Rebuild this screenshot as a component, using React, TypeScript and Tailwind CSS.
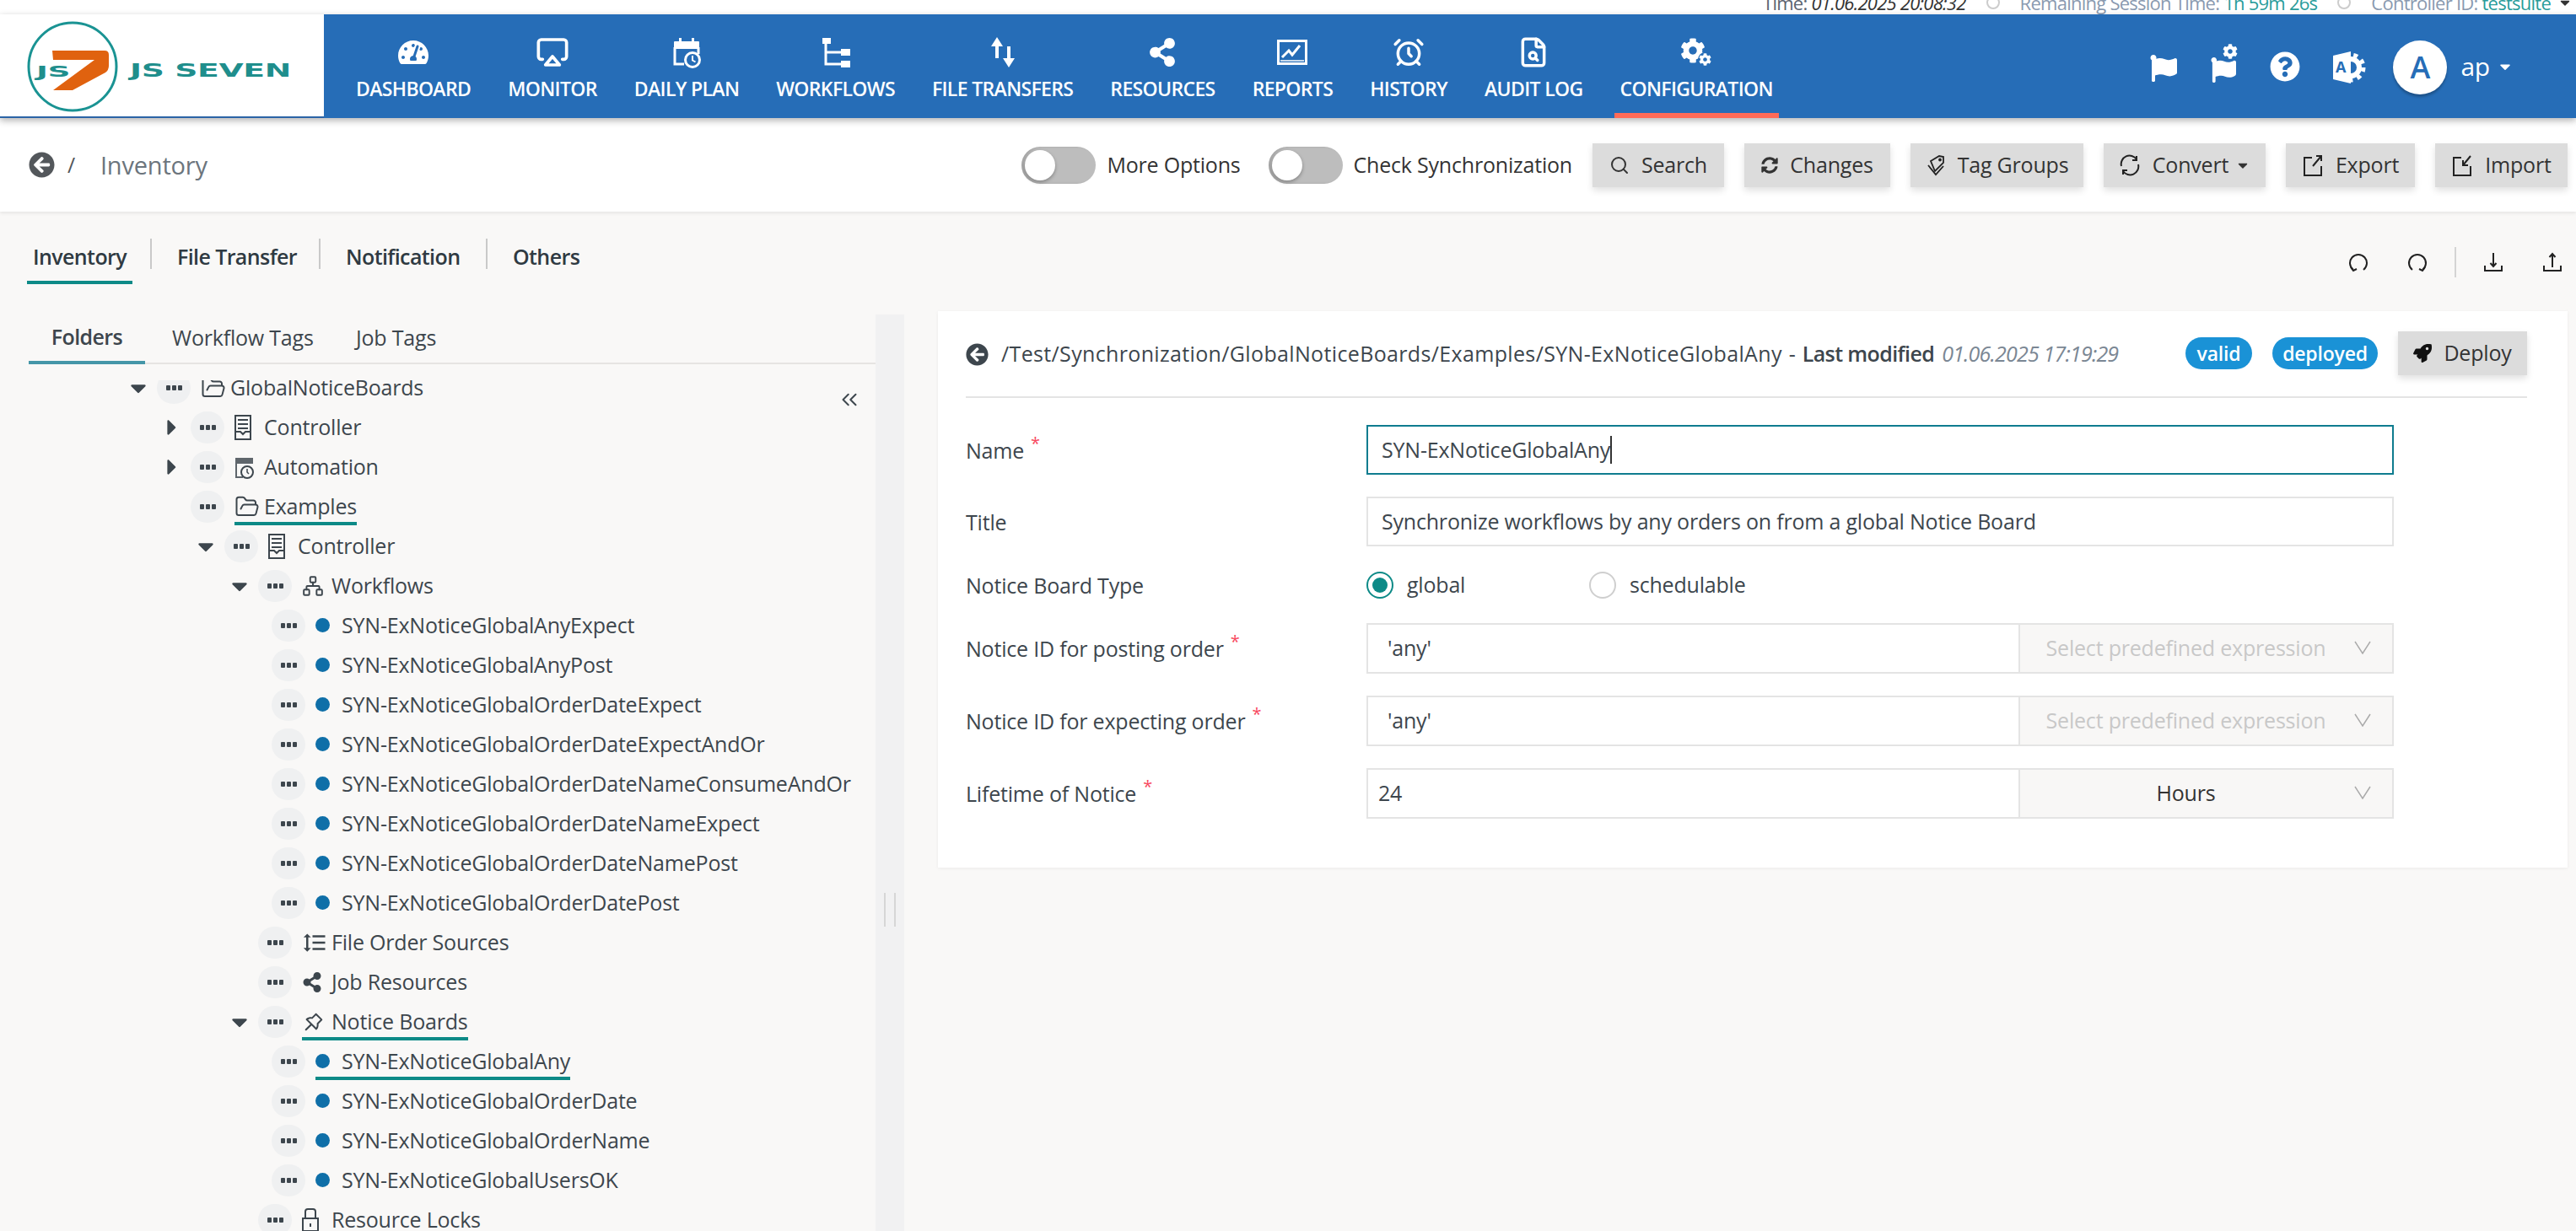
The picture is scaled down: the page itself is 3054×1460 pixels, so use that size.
import React from 'react';
import { AlarmClock, Airplay, ChevronsLeft, FileSearch, FolderOpen, Network, Search } from 'lucide-react';
import {
    FaTachometerAlt, FaShareAlt, FaCog, FaFlag, FaQuestionCircle, FaCaretDown, FaCaretRight,
    FaArrowCircleLeft, FaRocket, FaSyncAlt,
} from 'react-icons/fa';
import { AiOutlinePushpin } from 'react-icons/ai';
import { MdFormatLineSpacing } from 'react-icons/md';

const DailyPlanIcon = ({ className = '' }: { className?: string }) => (
    <svg viewBox="0 0 33 37" className={className} fill="none">
        <path d="M2 5h5V1h3v4h12V1h3v4h5a1 1 0 0 1 1 1v8H1V6a1 1 0 0 1 1-1z" fill="currentColor" />
        <path d="M2 12v20h11M30 12v8" stroke="currentColor" strokeWidth="3" />
        <circle cx="23" cy="27" r="8.5" stroke="currentColor" strokeWidth="3" />
        <path d="M23 22v5.5l3.5 2" stroke="currentColor" strokeWidth="2" />
    </svg>
);

const WorkflowIcon = () => (
    <svg viewBox="0 0 34 36" className="w-[34px] h-[36px]" fill="none">
        <rect x="1" y="1" width="10" height="7" fill="currentColor" />
        <rect x="23" y="14" width="11" height="8" fill="currentColor" />
        <rect x="23" y="28" width="11" height="8" fill="currentColor" />
        <path d="M5 8v24h18M5 18h18" stroke="currentColor" strokeWidth="3" />
    </svg>
);

const TransferIcon = () => (
    <svg viewBox="0 0 30 36" className="w-[30px] h-[36px]" fill="currentColor">
        <path d="M8 0l7 11h-5v14H6V11H1z" />
        <path d="M22 36l-7-11h5V11h4v14h5z" />
    </svg>
);

const ReportsIcon = () => (
    <svg viewBox="0 0 36 30" className="w-[36px] h-[30px]" fill="none" stroke="currentColor">
        <rect x="1.5" y="1.5" width="33" height="27" strokeWidth="3" />
        <path d="M6 21l8-8 4 5 9-11" strokeWidth="3" />
        <path d="M4 25h28" strokeWidth="1.5" />
    </svg>
);

const ConfigIcon = () => (
    <span className="relative block w-[38px] h-[34px]">
        <FaCog size={30} />
        <span className="absolute right-0 bottom-0 rounded-full bg-[#266db7] p-[1px]">
            <FaCog size={15} />
        </span>
    </span>
);

const FlagGearIcon = () => (
    <span className="relative block w-[32px] h-[46px]">
        <span className="absolute left-[14px] top-0"><FaCog size={18} /></span>
        <span className="absolute left-0 bottom-0"><FaFlag size={30} /></span>
    </span>
);

const AccessIcon = () => (
    <svg viewBox="0 0 40 38" className="w-[40px] h-[38px]">
        <g transform="translate(21 19)">
            <circle r="10" fill="none" stroke="#fff" strokeWidth="6" />
            <circle r="15" fill="none" stroke="#fff" strokeWidth="5" strokeDasharray="5 5.5" />
        </g>
        <path d="M0 5L21 0v38L0 33z" fill="#fff" />
        <text x="3" y="25" fontSize="18" fontWeight="700" fill="#266db7" fontFamily="Open Sans, sans-serif">A</text>
    </svg>
);

const Undo = ({ flip = false }: { flip?: boolean }) => (
    <svg viewBox="0 0 24 24" className={`w-[24px] h-[24px] ${flip ? '-scale-x-100' : ''}`} fill="none" stroke="#222" strokeWidth="2">
        <path d="M6 21A10 10 0 1 1 18 21" />
        <path d="M3 18l3 4 4-2" />
    </svg>
);

const TrayArrow = ({ up = false }: { up?: boolean }) => (
    <svg viewBox="0 0 24 24" className="w-[24px] h-[24px]" fill="none" stroke="#222" strokeWidth="2">
        <path d="M2 16v6h20v-6" />
        {up ? <path d="M12 18V2M8.5 6L12 2l3.5 4" /> : <path d="M12 1v16M8.5 13l3.5 4 3.5-4" />}
    </svg>
);

const ChangesIcon = () => <FaSyncAlt size={20} />;

const TagIcon = () => (
    <svg viewBox="0 0 24 26" className="w-[24px] h-[26px]" fill="none" stroke="#222" strokeWidth="1.8">
        <path d="M6 8l10-6 5 1v7L11 20z" />
        <circle cx="17" cy="6.5" r="1" />
        <path d="M3 13l9 11 9-10" />
    </svg>
);

const ConvertIcon = () => (
    <svg viewBox="0 0 26 26" className="w-[26px] h-[26px]" fill="none" stroke="#222" strokeWidth="2">
        <path d="M3 14A10 10 0 0 1 21 6" />
        <path d="M23 12A10 10 0 0 1 5 20" />
        <path d="M21 2v5h-5M5 24v-5h5" />
    </svg>
);

const ExportIcon = ({ down = false }: { down?: boolean }) => (
    <svg viewBox="0 0 26 26" className="w-[26px] h-[26px]" fill="none" stroke="#222" strokeWidth="2">
        <path d="M12 4H3v21h20v-11" />
        {down ? <path d="M23 2L14 13M14 7v6h6" /> : <path d="M13 14L23 2M17 2h6v6" />}
    </svg>
);

const ControllerIcon = () => (
    <svg viewBox="0 0 20 30" className="w-[20px] h-[30px]" fill="none" stroke="#3d464d" strokeWidth="2">
        <path d="M1 1h18v28H1z" />
        <path d="M4 6h12M4 11h12M4 16h12" />
        <path d="M1 20h6l3 3 3-3h6" />
    </svg>
);

const AutomationIcon = () => (
    <svg viewBox="0 0 23 30" className="w-[23px] h-[30px]" fill="none">
        <path d="M1 4h21v7H1z" fill="#5f666c" />
        <path d="M2 10v17h8" stroke="#5f666c" strokeWidth="2" />
        <circle cx="15" cy="21" r="7" fill="#f9f8f7" stroke="#3d464d" strokeWidth="2" />
        <path d="M15 17v4l2 2" stroke="#3d464d" strokeWidth="1.5" />
    </svg>
);

const LockIcon = () => (
    <svg viewBox="0 0 20 30" className="w-[20px] h-[30px]" fill="none" stroke="#3d464d" strokeWidth="2">
        <path d="M4 14V5a3 3 0 0 1 3-3h6a3 3 0 0 1 3 3v9" />
        <rect x="1" y="13" width="18" height="15" />
        <path d="M10 19v4" />
    </svg>
);

const navItems = [
    { label: 'DASHBOARD', icon: <FaTachometerAlt size={36} /> },
    { label: 'MONITOR', icon: <Airplay size={40} strokeWidth={2.2} /> },
    { label: 'DAILY PLAN', icon: <DailyPlanIcon className="w-[33px] h-[37px]" /> },
    { label: 'WORKFLOWS', icon: <WorkflowIcon /> },
    { label: 'FILE TRANSFERS', icon: <TransferIcon /> },
    { label: 'RESOURCES', icon: <FaShareAlt size={34} /> },
    { label: 'REPORTS', icon: <ReportsIcon /> },
    { label: 'HISTORY', icon: <AlarmClock size={38} strokeWidth={2.2} /> },
    { label: 'AUDIT LOG', icon: <FileSearch size={38} strokeWidth={2.2} /> },
    { label: 'CONFIGURATION', icon: <ConfigIcon />, active: true },
];

const Logo = () => (
    <svg viewBox="0 0 384 122" className="w-[384px] h-[122px]">
        <circle cx="86" cy="62" r="52" fill="none" stroke="#1a9393" strokeWidth="3" />
        <path d="M62 43h62q5 0 5 5v13q0 5-4 8L86 90H63l49-36H63z" fill="#e0620f" />
        <text x="43" y="74" fontSize="17" fontWeight="700" fill="#1f8e8c" textLength="40" lengthAdjust="spacingAndGlyphs" fontFamily="DejaVu Sans, sans-serif">JS</text>
        <text x="154" y="74" fontSize="22" fontWeight="700" fill="#1f8e8c" textLength="191" lengthAdjust="spacingAndGlyphs" fontFamily="DejaVu Sans, sans-serif">JS SEVEN</text>
    </svg>
);

const ToolbarButton = ({ icon, label, w, caret }: { icon: React.ReactNode; label: string; w: string; caret?: boolean }) => (
    <div className={`${w} h-[52px] bg-[#dcdcdc] shadow-[0_4px_8px_rgba(0,0,0,0.12)] flex items-center justify-center gap-[14px] text-[#333]`}>
        {icon}
        <span>{label}</span>
        {caret && <FaCaretDown size={18} className="-ml-[6px]" />}
    </div>
);

const Toggle = ({ label }: { label: string }) => (
    <div className="flex items-center gap-[13px]">
        <div className="w-[88px] h-[44px] rounded-full bg-[#bdbdbd] flex items-center pl-[4px] shadow-[inset_3px_0_3px_rgba(0,0,0,0.12)]">
            <div className="w-[36px] h-[36px] rounded-full bg-white shadow-[0_2px_4px_rgba(0,0,0,0.3)]" />
        </div>
        <span className="text-[#333]">{label}</span>
    </div>
);

type Row = {
    pad: string;
    arrow?: 'down' | 'right';
    icon?: React.ReactNode;
    label: string;
    selected?: boolean;
};

const dot = <span className="block w-[17px] h-[17px] rounded-full bg-[#0f6fa8]" />;

const treeRows: Row[] = [
    { pad: 'pl-[154px]', arrow: 'down', icon: <FolderOpen size={30} strokeWidth={1.6} />, label: 'GlobalNoticeBoards' },
    { pad: 'pl-[194px]', arrow: 'right', icon: <ControllerIcon />, label: 'Controller' },
    { pad: 'pl-[194px]', arrow: 'right', icon: <AutomationIcon />, label: 'Automation' },
    { pad: 'pl-[194px]', icon: <FolderOpen size={30} strokeWidth={1.6} />, label: 'Examples', selected: true },
    { pad: 'pl-[234px]', arrow: 'down', icon: <ControllerIcon />, label: 'Controller' },
    { pad: 'pl-[274px]', arrow: 'down', icon: <Network size={26} strokeWidth={1.8} />, label: 'Workflows' },
    { pad: 'pl-[290px]', label: 'SYN-ExNoticeGlobalAnyExpect' },
    { pad: 'pl-[290px]', label: 'SYN-ExNoticeGlobalAnyPost' },
    { pad: 'pl-[290px]', label: 'SYN-ExNoticeGlobalOrderDateExpect' },
    { pad: 'pl-[290px]', label: 'SYN-ExNoticeGlobalOrderDateExpectAndOr' },
    { pad: 'pl-[290px]', label: 'SYN-ExNoticeGlobalOrderDateNameConsumeAndOr' },
    { pad: 'pl-[290px]', label: 'SYN-ExNoticeGlobalOrderDateNameExpect' },
    { pad: 'pl-[290px]', label: 'SYN-ExNoticeGlobalOrderDateNamePost' },
    { pad: 'pl-[290px]', label: 'SYN-ExNoticeGlobalOrderDatePost' },
    { pad: 'pl-[274px]', icon: <MdFormatLineSpacing size={30} />, label: 'File Order Sources' },
    { pad: 'pl-[274px]', icon: <FaShareAlt size={24} />, label: 'Job Resources' },
    { pad: 'pl-[274px]', arrow: 'down', icon: <AiOutlinePushpin size={28} />, label: 'Notice Boards', selected: true },
    { pad: 'pl-[290px]', label: 'SYN-ExNoticeGlobalAny', selected: true },
    { pad: 'pl-[290px]', label: 'SYN-ExNoticeGlobalOrderDate' },
    { pad: 'pl-[290px]', label: 'SYN-ExNoticeGlobalOrderName' },
    { pad: 'pl-[290px]', label: 'SYN-ExNoticeGlobalUsersOK' },
    { pad: 'pl-[274px]', icon: <LockIcon />, label: 'Resource Locks' },
];

const TreeRow = ({ row }: { row: Row }) => (
    <div className={`${row.pad} h-[47px] flex items-center`}>
        <span className="w-[20px] mr-[12px] flex justify-center text-[#3d464d]">
            {row.arrow === 'down' && <FaCaretDown size={30} />}
            {row.arrow === 'right' && <FaCaretRight size={30} />}
        </span>
        <span className="w-[40px] h-[38px] rounded-full bg-[#eff0f1] flex items-center justify-center gap-[2px] shrink-0">
            <i className="block w-[5px] h-[6px] rounded-[1px] bg-[#3d464d]" />
            <i className="block w-[5px] h-[6px] rounded-[1px] bg-[#3d464d]" />
            <i className="block w-[5px] h-[6px] rounded-[1px] bg-[#3d464d]" />
        </span>
        <span className={`ml-[12px] h-[36px] flex items-center whitespace-nowrap ${row.selected ? 'shadow-[0_4px_0_0_#0d8a87]' : ''}`}>
            <span className={`flex items-center ${row.icon ? 'w-[35px]' : 'w-[31px]'}`}>{row.icon ?? dot}</span>
            {row.label}
        </span>
    </div>
);

const Chevron = () => (
    <svg viewBox="0 0 20 16" className="w-[20px] h-[16px] absolute right-[25px] top-[19px]" fill="none" stroke="#aaa" strokeWidth="1.5">
        <path d="M1 1l9 14 9-14" />
    </svg>
);

const FormLabel = ({ text, required }: { text: string; required?: boolean }) => (
    <div className="w-[475px] h-[36px] flex shrink-0">
        <span className="leading-[36px]">{text}</span>
        {required && <span className="ml-[8px] text-[#f8485e] text-[20px] leading-[20px]">*</span>}
    </div>
);

const Combo = ({ value, option, placeholder, pad }: { value: string; option: string; placeholder?: boolean; pad: string }) => (
    <div className="flex h-[60px] w-[1218px] border-2 border-[#e4e4e4]">
        <div className={`w-[773px] flex items-center ${pad} border-r-2 border-[#e4e4e4]`}>{value}</div>
        <div className={`relative flex-1 bg-[#f8f7f6] flex items-center justify-center pr-[48px] ${placeholder ? 'text-[#c8c8c8]' : 'text-[#333]'}`}>
            {option}
            <Chevron />
        </div>
    </div>
);

export default function App() {
    return (
        <div className="w-screen h-screen overflow-hidden flex flex-col bg-[#f9f8f7] font-['Open_Sans',sans-serif] text-[25px] tracking-[-0.2px] text-[#3d464d]">
            <div className="h-[17px] shrink-0 bg-white overflow-hidden flex justify-end items-end pr-[4px] text-[22px] leading-[30px] tracking-[-0.75px]">
                <div className="flex items-center h-[30px] mb-[-1px] whitespace-nowrap text-[#8a9ab0]">
                    <span className="text-[#5a6470]">Time:&nbsp;</span>
                    <span className="italic text-[#333]">01.06.2025 20:08:32</span>
                    <span className="mx-[24px] w-[16px] h-[16px] rounded-full border-2 border-[#ccc]" />
                    <span>Remaining Session Time:&nbsp;</span>
                    <span className="text-[#2a9d9b]">1h 59m 26s</span>
                    <span className="mx-[24px] w-[16px] h-[16px] rounded-full border-2 border-[#ccc]" />
                    <span>Controller ID:&nbsp;</span>
                    <span className="text-[#2a9d9b]">testsuite</span>
                    <FaCaretDown size={18} className="ml-[8px] text-[#333]" />
                </div>
            </div>

            <header className="h-[123px] shrink-0 bg-[#266db7] flex text-white shadow-[0_3px_8px_rgba(0,0,0,0.3)] z-20">
                <div className="w-[384px] h-[123px] bg-white border-b-2 border-[#2b64a6] shrink-0">
                    <Logo />
                </div>
                <nav className="flex pl-[31px] gap-[30px]">
                    {navItems.map((item) => (
                        <div key={item.label} className={`px-[7px] flex flex-col items-center border-b-[6px] ${item.active ? 'border-[#ff6b57]' : 'border-transparent'}`}>
                            <div className="h-[50px] mt-[20px] flex items-center justify-center">{item.icon}</div>
                            <div className="text-[23px] font-semibold leading-[36px] tracking-[-0.65px] whitespace-nowrap">{item.label}</div>
                        </div>
                    ))}
                </nav>
                <div className="ml-auto flex items-center pr-[74px]">
                    <FaFlag size={32} className="mr-[40px] mt-[5px]" />
                    <div className="mr-[38px] mb-[7px]"><FlagGearIcon /></div>
                    <FaQuestionCircle size={36} className="mr-[39px]" />
                    <div className="mr-[31px] mt-[3px]"><AccessIcon /></div>
                    <div className="w-[64px] h-[64px] mt-[2px] rounded-full bg-white text-[#266db7] flex items-center justify-center text-[36px] font-semibold shadow-[0_3px_3px_rgba(0,0,0,0.25)]">A</div>
                    <span className="ml-[16px] text-[30px]">ap</span>
                    <FaCaretDown size={20} className="ml-[8px]" />
                </div>
            </header>

            <div className="h-[111px] shrink-0 bg-white flex items-center pl-[34px] pr-[10px] shadow-[0_2px_4px_rgba(0,0,0,0.08)] z-10">
                <FaArrowCircleLeft size={31} className="text-[#53575b]" />
                <span className="ml-[15px] text-[#53575b]">/</span>
                <span className="ml-[30px] text-[#6c757d] text-[29px]">Inventory</span>
                <div className="ml-auto flex items-center">
                    <Toggle label="More Options" />
                    <div className="ml-[33px]"><Toggle label="Check Synchronization" /></div>
                    <div className="ml-[24px] flex gap-[24px]">
                        <ToolbarButton w="w-[156px]" icon={<Search size={24} strokeWidth={2} />} label="Search" />
                        <ToolbarButton w="w-[173px]" icon={<ChangesIcon />} label="Changes" />
                        <ToolbarButton w="w-[205px]" icon={<TagIcon />} label="Tag Groups" />
                        <ToolbarButton w="w-[192px]" icon={<ConvertIcon />} label="Convert" caret />
                        <ToolbarButton w="w-[153px]" icon={<ExportIcon />} label="Export" />
                        <ToolbarButton w="w-[157px]" icon={<ExportIcon down />} label="Import" />
                    </div>
                </div>
            </div>

            <div className="h-[118px] shrink-0 flex items-start pl-[32px] pr-[16px] pt-[32px]">
                <div className="flex font-semibold tracking-[-0.6px] text-[#2f3a42] items-center">
                    <div className="w-[125px] h-[54px] flex justify-center pt-[3px] border-b-4 border-[#0d8a87]">Inventory</div>
                    <div className="w-[2px] h-[36px] bg-[#c9c9c9] ml-[21px] -mt-[18px]" />
                    <div className="pl-[30px] w-[198px] h-[54px] pt-[3px]">File Transfer</div>
                    <div className="w-[2px] h-[36px] bg-[#c9c9c9] -mt-[18px]" />
                    <div className="pl-[30px] w-[196px] h-[54px] pt-[3px]">Notification</div>
                    <div className="w-[2px] h-[36px] bg-[#c9c9c9] -mt-[18px]" />
                    <div className="pl-[30px] h-[54px] pt-[3px]">Others</div>
                </div>
                <div className="ml-auto flex items-center h-[36px] mt-[10px] gap-[46px]">
                    <Undo />
                    <Undo flip />
                    <div className="w-[2px] h-[36px] bg-[#d4d4d4] -mx-[14px]" />
                    <TrayArrow />
                    <TrayArrow up />
                </div>
            </div>

            <div className="flex-1 flex min-h-0">
                <aside className="w-[1072px] shrink-0 relative mt-[4px] flex flex-col">
                    <div className="absolute right-0 top-0 bottom-0 w-[34px] bg-[#f1f1f2] flex flex-col items-center">
                        <div className="mt-[686px] w-[14px] h-[40px] border-x-2 border-[#d6d6d6]" />
                    </div>
                    <div className="w-[1004px] ml-[34px] h-[59px] flex border-b-2 border-[#e6e4e2] shrink-0">
                        <div className="w-[138px] h-[59px] pb-[2px] flex items-center justify-center font-semibold tracking-[-0.6px] border-b-4 border-[#4596a8]">Folders</div>
                        <div className="ml-[32px] w-[166px] pb-[2px] h-[57px] flex items-center whitespace-nowrap">Workflow Tags</div>
                        <div className="ml-[52px] pb-[2px] h-[57px] flex items-center">Job Tags</div>
                    </div>
                    <div className="relative flex-1 mt-[19px] overflow-hidden">
                        <ChevronsLeft size={30} strokeWidth={1.6} className="absolute left-[992px] top-[8px] text-[#3d464d]" />
                        <div className="-mt-[15px]">
                            {treeRows.map((row, i) => <TreeRow key={i} row={row} />)}
                        </div>
                    </div>
                </aside>

                <main className="flex-1 pl-[40px] pr-[10px]">
                    <section className="bg-white shadow-[0_1px_4px_rgba(0,0,0,0.06)] pl-[33px] pr-[48px] pb-[58px]">
                        <div className="h-[103px] pt-[24px] border-b-2 border-[#e4e4e4] flex items-start">
                            <div className="h-[52px] pt-[2px] flex items-center whitespace-nowrap">
                                <FaArrowCircleLeft size={27} className="text-[#3d464d] mr-[15px]" />
                                <span className="font-medium tracking-[0.35px]">/Test/Synchronization/GlobalNoticeBoards/Examples/SYN-ExNoticeGlobalAny</span>
                                <span className="mx-[8px]">-</span>
                                <span className="font-semibold tracking-[-0.6px]">Last modified</span>
                                <span className="ml-[9px] italic text-[#7b8794] tracking-[-0.8px]">01.06.2025 17:19:29</span>
                            </div>
                            <div className="ml-auto h-[52px] flex items-center">
                                <span className="w-[79px] h-[38px] rounded-full bg-[#1a92d6] text-white flex items-center justify-center font-semibold text-[23px]">valid</span>
                                <span className="ml-[24px] w-[125px] h-[38px] rounded-full bg-[#1a92d6] text-white flex items-center justify-center font-semibold text-[23px]">deployed</span>
                                <div className="ml-[24px]">
                                    <ToolbarButton w="w-[153px]" icon={<FaRocket size={22} className="text-[#111]" />} label="Deploy" />
                                </div>
                            </div>
                        </div>

                        <div className="pt-[32px] flex flex-col gap-[26px]">
                            <div className="flex items-center">
                                <FormLabel text="Name" required />
                                <div className="w-[1218px] h-[59px] border-2 border-[#0f7c8f] pl-[16px] flex items-center">
                                    SYN-ExNoticeGlobalAny
                                    <span className="w-[2px] h-[33px] bg-[#333]" />
                                </div>
                            </div>
                            <div className="flex items-center">
                                <FormLabel text="Title" />
                                <div className="w-[1218px] h-[59px] border-2 border-[#e4e4e4] pl-[16px] flex items-center">
                                    Synchronize workflows by any orders on from a global Notice Board
                                </div>
                            </div>
                            <div className="flex items-center h-[39px]">
                                <FormLabel text="Notice Board Type" />
                                <div className="w-[32px] h-[32px] rounded-full border-2 border-[#0d8a87] flex items-center justify-center">
                                    <div className="w-[18px] h-[18px] rounded-full bg-[#0d8a87]" />
                                </div>
                                <span className="ml-[16px] w-[216px]">global</span>
                                <div className="w-[32px] h-[32px] rounded-full border-2 border-[#cfcfcf]" />
                                <span className="ml-[16px]">schedulable</span>
                            </div>
                            <div className="flex items-center">
                                <FormLabel text="Notice ID for posting order" required />
                                <Combo value="'any'" option="Select predefined expression" placeholder pad="pl-[23px]" />
                            </div>
                            <div className="flex items-center">
                                <FormLabel text="Notice ID for expecting order" required />
                                <Combo value="'any'" option="Select predefined expression" placeholder pad="pl-[23px]" />
                            </div>
                            <div className="flex items-center">
                                <FormLabel text="Lifetime of Notice" required />
                                <Combo value="24" option="Hours" pad="pl-[12px]" />
                            </div>
                        </div>
                    </section>
                </main>
            </div>
        </div>
    );
}
